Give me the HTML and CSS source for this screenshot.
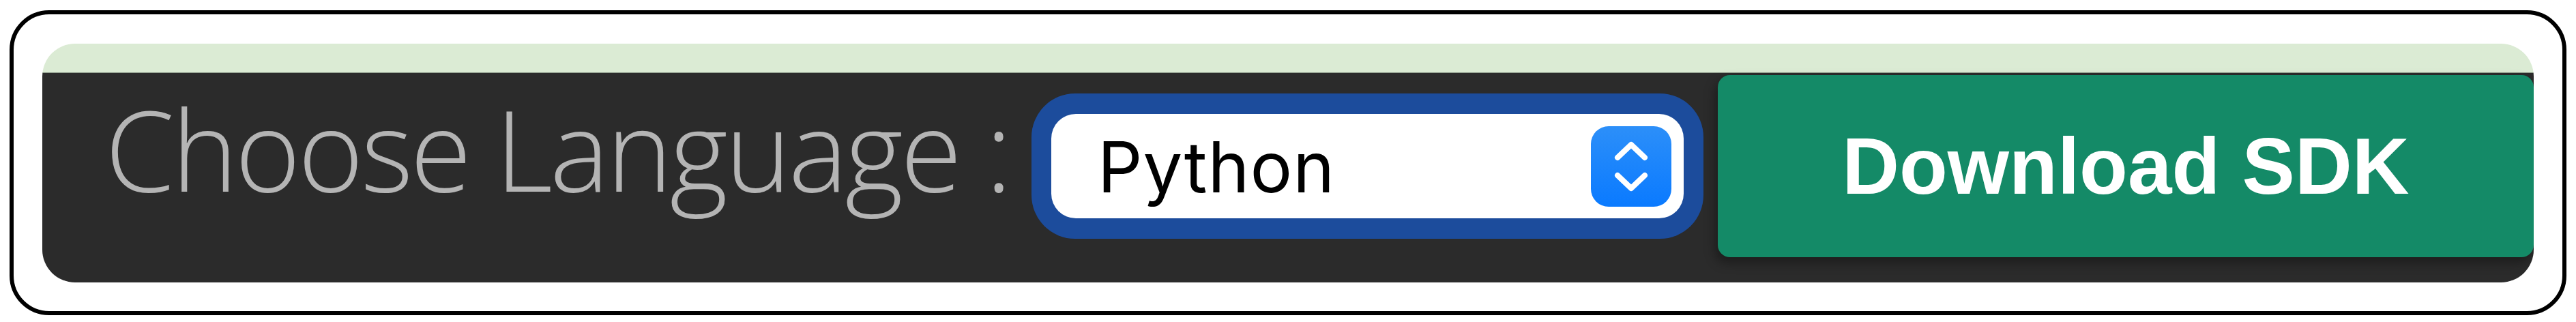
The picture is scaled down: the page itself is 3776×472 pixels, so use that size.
FILE: index.html
```html
<!DOCTYPE html>
<html lang="en">
<head>
<meta charset="utf-8">
<title>Choose Language</title>
<link rel="stylesheet" href="styles.css">
</head>
<body>
<div class="frame">
  <div class="panel">
    <div class="strip"></div>
    <div class="bar">
      <div class="label">Choose Language :</div>
      <div class="ring">
        <div class="select">
          <span class="value">Python</span>
          <span class="stepper">
            <svg width="118" height="118" viewBox="0 0 118 118" aria-hidden="true">
              <path d="M39 46 L59 27 L79 46" fill="none" stroke="#fff" stroke-width="8" stroke-linecap="round" stroke-linejoin="round"/>
              <path d="M39 72 L59 91 L79 72" fill="none" stroke="#fff" stroke-width="8" stroke-linecap="round" stroke-linejoin="round"/>
            </svg>
          </span>
        </div>
      </div>
      <div class="download">Download SDK</div>
    </div>
  </div>
</div>
</body>
</html>
```

FILE: styles.css
```css
html, body {
  margin: 0;
  padding: 0;
  background: #ffffff;
}

body {
  width: 3776px;
  height: 472px;
  padding: 15px 14px;
  box-sizing: border-box;
}

.frame {
  width: 3748px;
  height: 447px;
  box-sizing: border-box;
  border: 6px solid #000;
  border-radius: 58px;
  background: #fff;
  padding: 43px 42px 42px 42px;
}

.panel {
  height: 350px;
  border-radius: 48px;
  overflow: hidden;
  display: flex;
  flex-direction: column;
}

.strip {
  height: 42px;
  flex: none;
  background: #dbebd4;
  border-bottom: 1px solid #8f9c8b;
}

.bar {
  flex: 1;
  background: #2b2b2b;
  display: flex;
  align-items: flex-start;
  padding-left: 92px;
}

.label {
  font-family: "Open Sans", sans-serif;
  font-weight: 300;
  font-size: 164px;
  line-height: 1;
  letter-spacing: -4px;
  color: #b4b4b4;
  margin-top: 29px;
  margin-right: 32px;
  white-space: nowrap;
}

.ring {
  flex: none;
  margin-top: 30px;
  width: 985px;
  height: 213px;
  box-sizing: border-box;
  padding: 30px 29px;
  background: #1c4c9c;
  border-radius: 64px;
}

.select {
  height: 153px;
  background: #fff;
  border-radius: 36px;
  display: flex;
  align-items: center;
  justify-content: space-between;
  padding: 0 18px 0 68px;
}

.value {
  font-family: "Inter", "Liberation Sans", sans-serif;
  font-size: 103px;
  color: #000;
  letter-spacing: 1px;
  line-height: 1;
  margin-top: 2px;
}

.stepper {
  width: 118px;
  height: 118px;
  border-radius: 26px;
  background: linear-gradient(180deg, #2c8ff9 0%, #0a7aff 100%);
  display: flex;
}

.download {
  flex: 1;
  margin-left: 21px;
  margin-top: 3px;
  height: 267px;
  background: #148a67;
  border-radius: 18px;
  box-shadow: -4px 8px 16px rgba(0, 0, 0, 0.35);
  display: flex;
  align-items: center;
  justify-content: center;
  font-family: "Liberation Sans", Arial, sans-serif;
  font-weight: 700;
  font-size: 116px;
  color: #fff;
}
```
